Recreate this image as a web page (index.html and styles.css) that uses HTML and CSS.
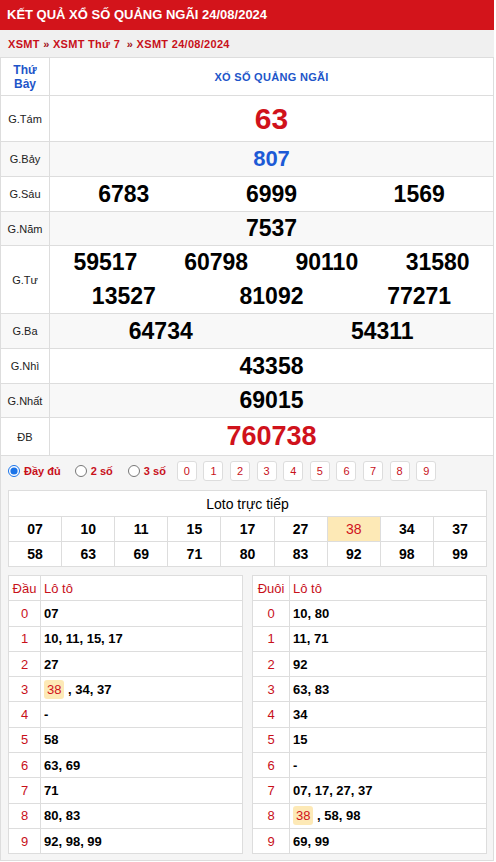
FILE: index.html
```html
<!DOCTYPE html>
<html lang="vi">
<head>
<meta charset="utf-8">
<title>KQXS Quảng Ngãi</title>
<link rel="stylesheet" href="styles.css">
</head>
<body>
<div class="page">
  <h1 class="title">KẾT QUẢ XỔ SỐ QUẢNG NGÃI 24/08/2024</h1>
  <div class="crumbs"><a href="#">XSMT</a> <span class="sep">»</span> <a href="#">XSMT Thứ 7</a> &nbsp;<span class="sep">»</span> <a href="#">XSMT 24/08/2024</a></div>

  <div class="result">
    <div class="row row-head">
      <div class="label day">Thứ<br>Bảy</div>
      <div class="value prov">XỔ SỐ QUẢNG NGÃI</div>
    </div>
    <div class="row row-tam">
      <div class="label">G.Tám</div>
      <div class="value"><span class="num n-red n-tam">63</span></div>
    </div>
    <div class="row">
      <div class="label">G.Bảy</div>
      <div class="value"><span class="num n-blue">807</span></div>
    </div>
    <div class="row">
      <div class="label">G.Sáu</div>
      <div class="value"><span class="num">6783</span><span class="num">6999</span><span class="num">1569</span></div>
    </div>
    <div class="row row-sm">
      <div class="label">G.Năm</div>
      <div class="value"><span class="num">7537</span></div>
    </div>
    <div class="row row-tu">
      <div class="label">G.Tư</div>
      <div class="value stack">
        <div class="line"><span class="num">59517</span><span class="num">60798</span><span class="num">90110</span><span class="num">31580</span></div>
        <div class="line"><span class="num">13527</span><span class="num">81092</span><span class="num">77271</span></div>
      </div>
    </div>
    <div class="row">
      <div class="label">G.Ba</div>
      <div class="value"><span class="num">64734</span><span class="num">54311</span></div>
    </div>
    <div class="row">
      <div class="label">G.Nhì</div>
      <div class="value"><span class="num">43358</span></div>
    </div>
    <div class="row row-sm">
      <div class="label">G.Nhất</div>
      <div class="value"><span class="num">69015</span></div>
    </div>
    <div class="row row-db">
      <div class="label">ĐB</div>
      <div class="value"><span class="num n-red n-db">760738</span></div>
    </div>
  </div>

  <div class="panel">
    <div class="controls">
      <label class="opt"><input type="radio" name="mode" checked> Đầy đủ</label>
      <label class="opt"><input type="radio" name="mode"> 2 số</label>
      <label class="opt"><input type="radio" name="mode"> 3 số</label>
      <div class="digits">
        <span class="dbtn">0</span><span class="dbtn">1</span><span class="dbtn">2</span><span class="dbtn">3</span><span class="dbtn">4</span><span class="dbtn">5</span><span class="dbtn">6</span><span class="dbtn">7</span><span class="dbtn">8</span><span class="dbtn">9</span>
      </div>
    </div>

    <table class="loto">
      <tr><th colspan="9">Loto trực tiếp</th></tr>
      <tr><td>07</td><td>10</td><td>11</td><td>15</td><td>17</td><td>27</td><td class="hl">38</td><td>34</td><td>37</td></tr>
      <tr><td>58</td><td>63</td><td>69</td><td>71</td><td>80</td><td>83</td><td>92</td><td>98</td><td>99</td></tr>
    </table>

    <div class="dd">
      <table class="ddt">
        <tr><th class="k">Đầu</th><th>Lô tô</th></tr>
        <tr><td class="k">0</td><td>07</td></tr>
        <tr><td class="k">1</td><td>10, 11, 15, 17</td></tr>
        <tr><td class="k">2</td><td>27</td></tr>
        <tr><td class="k">3</td><td><span class="tag">38</span> , 34, 37</td></tr>
        <tr><td class="k">4</td><td>-</td></tr>
        <tr><td class="k">5</td><td>58</td></tr>
        <tr><td class="k">6</td><td>63, 69</td></tr>
        <tr><td class="k">7</td><td>71</td></tr>
        <tr><td class="k">8</td><td>80, 83</td></tr>
        <tr><td class="k">9</td><td>92, 98, 99</td></tr>
      </table>
      <table class="ddt duoi">
        <tr><th class="k">Đuôi</th><th>Lô tô</th></tr>
        <tr><td class="k">0</td><td>10, 80</td></tr>
        <tr><td class="k">1</td><td>11, 71</td></tr>
        <tr><td class="k">2</td><td>92</td></tr>
        <tr><td class="k">3</td><td>63, 83</td></tr>
        <tr><td class="k">4</td><td>34</td></tr>
        <tr><td class="k">5</td><td>15</td></tr>
        <tr><td class="k">6</td><td>-</td></tr>
        <tr><td class="k">7</td><td>07, 17, 27, 37</td></tr>
        <tr><td class="k">8</td><td><span class="tag">38</span> , 58, 98</td></tr>
        <tr><td class="k">9</td><td>69, 99</td></tr>
      </table>
    </div>
  </div>
</div>
</body>
</html>
```

FILE: styles.css
```css
* { box-sizing: border-box; }
body {
  margin: 0;
  background: #fff;
  font-family: "Liberation Sans", Arial, sans-serif;
  color: #000;
}
.page { width: 494px; }

.title {
  margin: 0;
  height: 30px;
  line-height: 30px;
  padding-left: 7px;
  background: #d3141b;
  color: #fff;
  font-size: 13px;
  font-weight: bold;
}

.crumbs {
  height: 27px;
  line-height: 28px;
  padding-left: 8px;
  background: #f0f0f0;
  font-size: 11px;
  font-weight: bold;
  letter-spacing: 0.3px;
  color: #c8101a;
}
.crumbs a { color: #c8101a; text-decoration: none; }
.crumbs .sep { color: #a0101a; }

.result {
  border: 1px solid #ddd;
  border-bottom: none;
}
.row {
  display: flex;
  height: 35px;
  border-bottom: 1px solid #ddd;
}
.row:nth-child(2n+3) { background: #f8f8f8; }
.row-head { height: 38px; }
.row-tam { height: 46px; }
.row-sm { height: 34px; }
.row-tu { height: 68px; }
.row-db { height: 38px; }

.label {
  width: 49px;
  flex: none;
  border-right: 1px solid #ddd;
  display: flex;
  align-items: center;
  justify-content: center;
  text-align: center;
  font-size: 11px;
  color: #222;
}
.label.day {
  font-size: 12px;
  font-weight: bold;
  color: #1d55c9;
  line-height: 14px;
}
.value {
  flex: 1;
  display: flex;
  align-items: center;
}
.value.prov {
  justify-content: center;
  font-size: 11px;
  font-weight: bold;
  color: #1d55c9;
  letter-spacing: 0.3px;
}
.value.stack {
  flex-direction: column;
  align-items: stretch;
}
.line {
  height: 34px;
  display: flex;
  align-items: center;
}
.num {
  flex: 1 1 0;
  text-align: center;
  font-size: 23px;
  font-weight: bold;
  color: #000;
}
.n-red { color: #d0121b; }
.n-blue { color: #1d5ad6; font-size: 22px; }
.n-tam { font-size: 30px; }
.n-db { font-size: 27px; }

.panel {
  background: #f5f5f5;
  border: 1px solid #ddd;
  border-top: none;
  padding: 5px 6px 6px 7px;
}
.controls {
  display: flex;
  align-items: center;
  height: 20px;
}
.opt {
  display: flex;
  align-items: center;
  font-size: 11px;
  font-weight: bold;
  color: #c8101a;
  margin-right: 14px;
  white-space: pre;
}
.opt:nth-child(2) { margin-right: 15px; }
.opt:nth-child(3) { margin-right: 11px; }
.opt input {
  width: 12px;
  height: 12px;
  margin: 0 1px 0 0;
  accent-color: #1a73e8;
}
.digits {
  display: flex;
  gap: 6.6px;
}
.dbtn {
  width: 20px;
  height: 20px;
  background: #fff;
  border: 1px solid #ddd;
  border-radius: 3px;
  display: flex;
  align-items: center;
  justify-content: center;
  font-size: 11px;
  color: #c8101a;
}

.loto {
  margin-top: 9px;
  width: 479px;
  border-collapse: collapse;
  table-layout: fixed;
  background: #fff;
}
.loto th, .loto td {
  border: 1px solid #ddd;
  text-align: center;
  font-size: 14px;
  padding: 0;
}
.loto th {
  height: 26px;
  font-weight: normal;
}
.loto td {
  height: 25px;
  font-weight: bold;
}
.loto td.hl {
  background: #fde9b6;
  color: #d0121b;
  font-weight: normal;
}

.dd {
  margin-top: 8px;
  display: flex;
  gap: 9px;
}
.ddt {
  flex: 1;
  border-collapse: collapse;
  background: #fff;
}
.ddt th, .ddt td {
  border: 1px solid #ddd;
  height: 25.3px;
  padding: 0 0 0 3px;
  font-size: 13px;
  text-align: left;
}
.ddt th {
  font-weight: normal;
  color: #c8101a;
}
.ddt td { font-weight: bold; }
.ddt .k {
  width: 32px;
  text-align: center;
  padding: 0;
  color: #c8101a;
  font-weight: normal;
}
.ddt.duoi .k { width: 37px; }
.tag {
  display: inline-block;
  padding: 2px 3px;
  line-height: 15px;
  background: #fde9b6;
  border-radius: 3px;
  color: #d0121b;
  font-weight: normal;
}
```
